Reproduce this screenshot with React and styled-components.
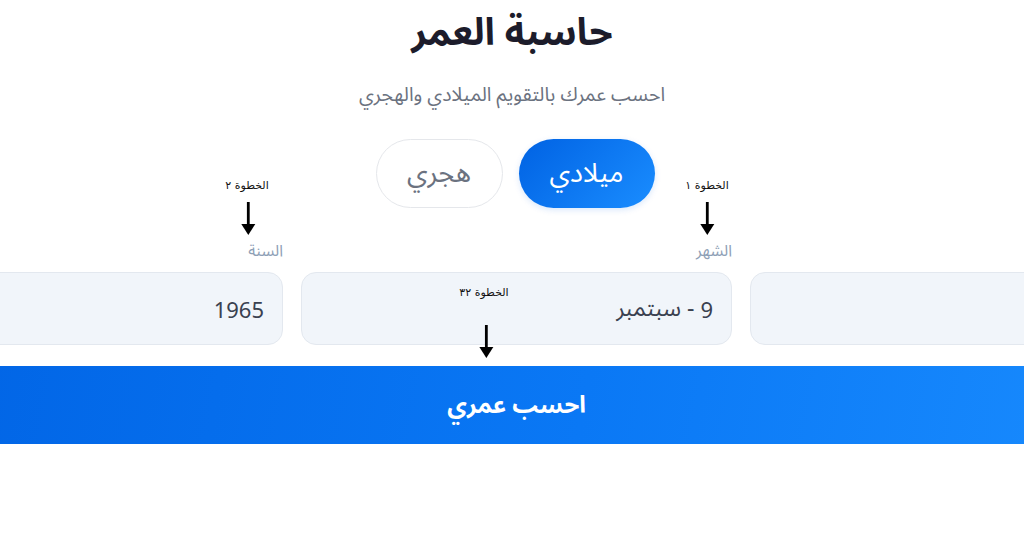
import React from "react";
import styled, { createGlobalStyle } from "styled-components";

const Global = createGlobalStyle`
  html, body { margin: 0; padding: 0; background: #ffffff; overflow: hidden; }
  body { font-family: "Noto Sans Arabic", "DejaVu Sans", "Noto Sans", sans-serif; }
  * { box-sizing: border-box; }
`;

const Page = styled.div`
  position: relative;
  width: 1024px;
  height: 538px;
  overflow: hidden;
  display: flex;
  flex-direction: column;
  align-items: center;
  direction: rtl;
  padding-top: 7px;
`;

const Title = styled.h1`
  margin: 0;
  font-size: 38px;
  line-height: 52px;
  font-weight: 700;
  color: #1c1c2b;
`;

const Subtitle = styled.p`
  margin: 22px 0 0;
  font-size: 19.5px;
  line-height: 28px;
  color: #6b7280;
`;

const Toggle = styled.div`
  display: flex;
  gap: 16px;
  margin-top: 30px;
  margin-left: 6px;
`;

const Pill = styled.button`
  height: 69px;
  width: ${(p) => (p.$active ? "136px" : "127px")};
  border-radius: 35px;
  font-family: inherit;
  font-size: 27px;
  border: ${(p) => (p.$active ? "none" : "1px solid #e5e7eb")};
  background: ${(p) =>
    p.$active ? "linear-gradient(135deg, #0062e3 0%, #1a8dff 100%)" : "#ffffff"};
  color: ${(p) => (p.$active ? "#ffffff" : "#6b7280")};
  box-shadow: ${(p) => (p.$active ? "0 2px 6px rgba(0,98,227,0.15)" : "none")};
  cursor: pointer;
`;

const Form = styled.div`
  display: flex;
  flex-direction: column;
  align-items: center;
  width: 1329px;
  margin-top: 33px;
  margin-left: 9px;
  flex-shrink: 0;
`;

const Fields = styled.div`
  display: grid;
  grid-template-columns: repeat(3, 1fr);
  gap: 18px;
  width: 100%;
`;

const Field = styled.div`
  display: flex;
  flex-direction: column;
  gap: 10px;
`;

const Label = styled.label`
  font-size: 16px;
  line-height: 21px;
  height: 21px;
  color: #8ea0b6;
`;

const Box = styled.div`
  height: 73px;
  border-radius: 15px;
  background: #f1f5fa;
  border: 1px solid #e3e8ef;
  display: flex;
  align-items: center;
  padding: 0 18px;
  font-size: 23px;
  color: #3a4150;
`;

const Num = styled.span`
  font-family: "Noto Sans", "Open Sans", sans-serif;
  font-size: 22px;
  direction: ltr;
  unicode-bidi: isolate;
`;

const Submit = styled.button`
  margin-top: 21px;
  width: 100%;
  height: 78px;
  border: none;
  font-family: inherit;
  font-size: 24px;
  font-weight: 700;
  color: #ffffff;
  background: linear-gradient(100deg, #0062e3 0%, #0a78f5 55%, #1a8dff 100%);
  cursor: pointer;
`;

const Note = styled.div`
  position: absolute;
  left: ${(p) => p.$x}px;
  top: ${(p) => p.$y}px;
  transform: translateX(-50%);
  display: flex;
  flex-direction: column;
  align-items: center;
  font-family: "DejaVu Sans", sans-serif;
  font-size: 11px;
  color: #111;
  direction: rtl;
  white-space: nowrap;
`;

const NoteText = styled.span`
  line-height: 16px;
`;

const ArrowWrap = styled.div`
  margin-top: ${(p) => p.$gap}px;
  margin-left: ${(p) => p.$shift}px;
  line-height: 0;
`;

function Arrow() {
  return (
    <svg width="16" height="33" viewBox="0 0 16 33">
      <rect x="6.6" y="0" width="2.8" height="24" fill="#000" />
      <path d="M1 22 L15 22 L8 33 Z" fill="#000" />
    </svg>
  );
}

function Annotation({ x, y, text, gap, shift }) {
  return (
    <Note $x={x} $y={y}>
      <NoteText>{text}</NoteText>
      <ArrowWrap $gap={gap} $shift={shift}>
        <Arrow />
      </ArrowWrap>
    </Note>
  );
}

export default function App() {
  return (
    <>
      <Global />
      <Page>
        <Title>حاسبة العمر</Title>
        <Subtitle>احسب عمرك بالتقويم الميلادي والهجري</Subtitle>
        <Toggle>
          <Pill $active>ميلادي</Pill>
          <Pill>هجري</Pill>
        </Toggle>
        <Form>
          <Fields>
            <Field>
              <Label>اليوم</Label>
              <Box />
            </Field>
            <Field>
              <Label>الشهر</Label>
              <Box>
                <Num>9</Num>&nbsp;-&nbsp;سبتمبر
              </Box>
            </Field>
            <Field>
              <Label>السنة</Label>
              <Box>
                <Num>1965</Num>
              </Box>
            </Field>
          </Fields>
          <Submit>احسب عمري</Submit>
        </Form>
        <Annotation x={707} y={178} text="الخطوة ١" gap={8} shift={0} />
        <Annotation x={247} y={178} text="الخطوة ٢" gap={8} shift={2} />
        <Annotation x={484} y={285} text="الخطوة ٣٢" gap={24} shift={4} />
      </Page>
    </>
  );
}
